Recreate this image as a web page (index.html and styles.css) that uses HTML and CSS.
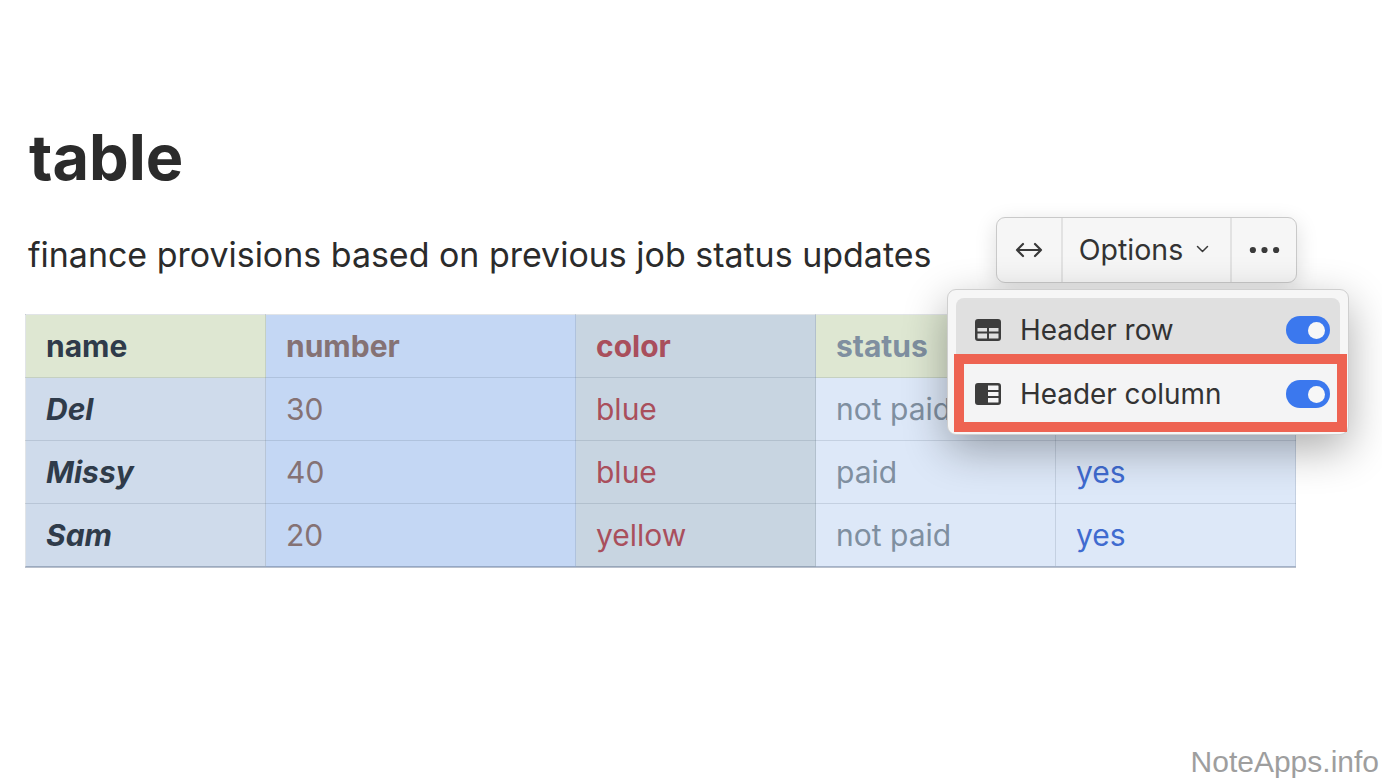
FILE: index.html
```html
<!DOCTYPE html>
<html lang="en">
<head>
<meta charset="utf-8">
<title>table</title>
<link rel="stylesheet" href="styles.css">
</head>
<body>
<main class="page">
  <h1 class="title">table</h1>
  <p class="intro">finance provisions based on previous job status updates</p>
  <table class="data">
    <colgroup>
      <col class="w240"><col class="w310"><col class="w240"><col class="w240"><col class="w240">
    </colgroup>
    <thead>
      <tr>
        <th class="c1 head-green">name</th>
        <th class="c2">number</th>
        <th class="c3">color</th>
        <th class="c4 head-green">status</th>
        <th class="c5"></th>
      </tr>
    </thead>
    <tbody>
      <tr><th class="c1 rowhead">Del</th><td class="c2">30</td><td class="c3">blue</td><td class="c4">not paid</td><td class="c5"></td></tr>
      <tr><th class="c1 rowhead">Missy</th><td class="c2">40</td><td class="c3">blue</td><td class="c4">paid</td><td class="c5">yes</td></tr>
      <tr><th class="c1 rowhead">Sam</th><td class="c2">20</td><td class="c3">yellow</td><td class="c4">not paid</td><td class="c5">yes</td></tr>
    </tbody>
  </table>
</main>

<div class="toolbar">
  <div class="tool tool-width">
    <svg width="28" height="16" viewBox="0 0 28 16" fill="none" stroke="#3a3a3a" stroke-width="2.200" stroke-linecap="round" stroke-linejoin="round"><path d="M2 8h24M8 2 2 8l6 6M20 2l6 6-6 6"/></svg>
  </div>
  <div class="tool tool-options">
    <span>Options</span>
    <svg width="13" height="8" viewBox="0 0 13 8" fill="none" stroke="#3a3a3a" stroke-width="1.500" stroke-linecap="round" stroke-linejoin="round"><path d="M1.500 1.500 6.500 6.500l5-5"/></svg>
  </div>
  <div class="tool tool-more">
    <svg width="31" height="8" viewBox="0 0 32 8" fill="#3a3a3a"><circle cx="4" cy="4" r="3.200"/><circle cx="16" cy="4" r="3.200"/><circle cx="28" cy="4" r="3.200"/></svg>
  </div>
</div>

<div class="menu">
  <div class="menu-item menu-item-active">
    <svg width="26" height="22" viewBox="0 0 26 22"><path fill="#3d3d3d" fill-rule="evenodd" d="M3 0h20a3 3 0 0 1 3 3v16a3 3 0 0 1-3 3H3a3 3 0 0 1-3-3V3a3 3 0 0 1 3-3ZM2.500 9v3.500h9.500V9Zm11.500 0v3.500h9.500V9ZM2.500 14.500V19a.5.5 0 0 0 .5.5h9v-5Zm11.500 0v5h9a.5.5 0 0 0 .5-.5v-4.500Z"/></svg>
    <span class="menu-label">Header row</span>
    <span class="switch"><span class="knob"></span></span>
  </div>
  <div class="menu-item menu-item-marked">
    <svg width="26" height="22" viewBox="0 0 26 22"><path fill="#3d3d3d" fill-rule="evenodd" d="M3 0h20a3 3 0 0 1 3 3v16a3 3 0 0 1-3 3H3a3 3 0 0 1-3-3V3a3 3 0 0 1 3-3Zm10 2.500v4.500h10.500V3a.5.5 0 0 0-.5-.5ZM13 9v4h10.500V9Zm0 6v4.500h10a.5.5 0 0 0 .5-.5v-4Z"/></svg>
    <span class="menu-label">Header column</span>
    <span class="switch"><span class="knob"></span></span>
  </div>
</div>

<div class="watermark">NoteApps.info</div>
</body>
</html>
```

FILE: styles.css
```css
*, *::before, *::after { box-sizing: border-box; }
html, body { margin: 0; height: 100%; }
body {
  position: relative;
  width: 1382px;
  height: 780px;
  overflow: hidden;
  background: #fff;
  font-family: Inter, "Noto Sans", sans-serif;
  color: #2b2b2b;
}
.page { padding: 120px 0 0 25px; }
.title {
  margin: 0 0 0 4px;
  font-size: 63px;
  line-height: 74px;
  font-weight: 700;
  color: #2b2b2b;
}
.intro {
  margin: 36px 0 0 3px;
  font-size: 33.960px;
  line-height: 50px;
  color: #2b2b2b;
}
.data {
  margin-top: 34px;
  width: 1270px;
  table-layout: fixed;
  border-collapse: collapse;
  font-size: 30px;
}
.w240 { width: 240px; }
.w310 { width: 310px; }
.data th, .data td {
  height: 63px;
  padding: 0 20px;
  text-align: left;
  font-weight: 400;
  border: 1px solid rgba(70, 85, 105, 0.16);
}
.data tbody tr:last-child th, .data tbody tr:last-child td { border-bottom: 2px solid rgba(70, 90, 120, 0.38); }
.data thead th { font-weight: 700; }
.data .rowhead { font-weight: 700; font-style: italic; }
.c1 { background: #cfdbeb; color: #2f3b4a; }
.c2 { background: #c4d7f4; color: #857274; }
.c3 { background: #c8d5e1; color: #a94f5c; }
.c4 { background: #dde8f8; color: #7f8fa0; }
.c5 { background: #dde8f8; color: #3f6bd0; }
.data .head-green { background: #dee7d2; }

.toolbar {
  position: absolute;
  left: 996px;
  top: 217px;
  width: 301px;
  height: 66px;
  display: flex;
  background: #f6f6f6;
  border: 1px solid #c9c9c9;
  border-radius: 9px;
  box-shadow: 0 6px 22px rgba(0, 0, 0, 0.14);
  font-size: 28.500px;
  color: #333;
}
.tool {
  display: flex;
  align-items: center;
  justify-content: center;
  border-left: 2px solid #e2e2e2;
}
.tool:first-child { border-left: 0; }
.tool-width { width: 64px; }
.tool-options { width: 169px; gap: 13px; padding: 0 5px 2px 0; }
.tool-more { flex: 1; }

.menu {
  position: absolute;
  left: 947px;
  top: 289px;
  width: 402px;
  height: 146px;
  padding: 8px;
  background: #f6f6f6;
  border: 1px solid #cfcfcf;
  border-radius: 9px;
  box-shadow: 0 14px 44px rgba(0, 0, 0, 0.32);
  font-size: 27.900px;
  color: #333;
}
.menu-item {
  display: flex;
  align-items: center;
  gap: 19px;
  height: 64px;
  padding: 0 10px 0 19px;
}
.menu-item-active { background: #e0e0e0; border-radius: 8px 8px 0 0; }
.menu-item-marked { position: relative; background: #f4f4f5; }
.menu-item-marked::after {
  content: "";
  position: absolute;
  left: -2px;
  right: -7px;
  top: -8px;
  height: 78px;
  border: 10px solid #ee6352;
  pointer-events: none;
}
.menu-label { flex: 1; }
.switch {
  display: flex;
  justify-content: flex-end;
  align-items: center;
  width: 44px;
  height: 28px;
  padding-right: 5px;
  border-radius: 14px;
  background: #3b78ee;
}
.knob {
  width: 17px;
  height: 17px;
  border-radius: 50%;
  background: #f7f7f7;
}
.watermark {
  position: absolute;
  right: 3px;
  bottom: -1px;
  font-family: "Liberation Sans", Arial, sans-serif;
  font-size: 30px;
  line-height: 38px;
  color: #9e9e9e;
}
```
